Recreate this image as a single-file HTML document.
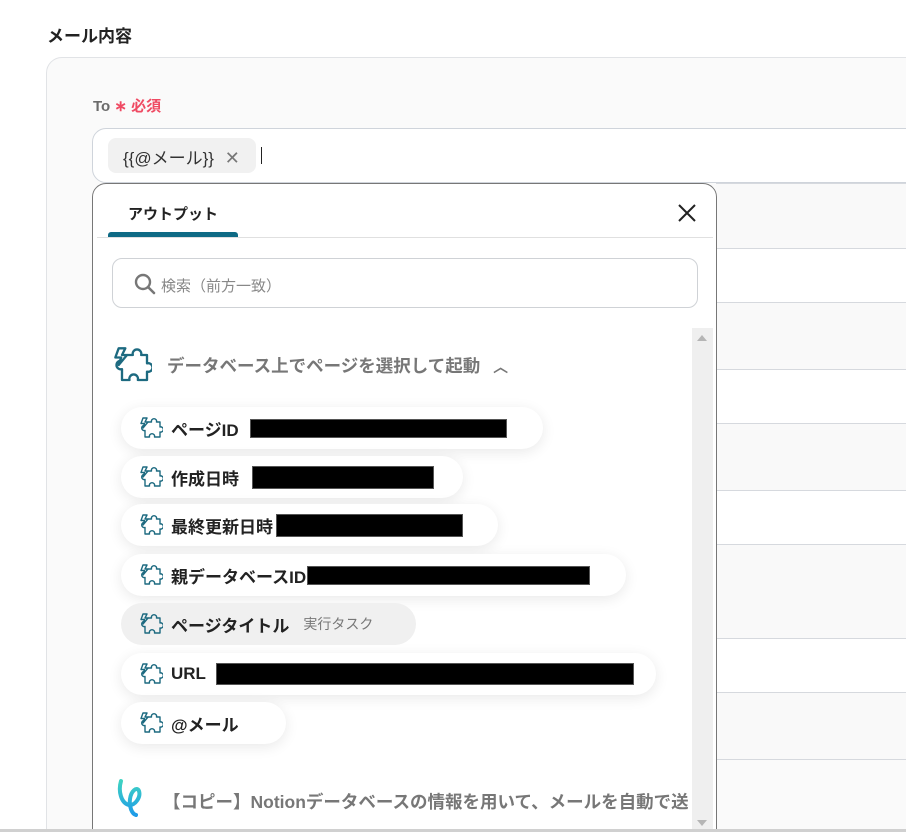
<!DOCTYPE html>
<html><head><meta charset="utf-8"><style>
*{box-sizing:border-box;margin:0;padding:0}
html,body{width:906px;height:832px;overflow:hidden}
body{background:#fff;font-family:"Liberation Sans","Noto Sans CJK JP",sans-serif;position:relative;color:#222}
.abs{position:absolute}
.band{position:absolute;left:716px;right:0;border-bottom:1px solid #d6d9de}
.pill{position:absolute;left:121px;height:42px;border-radius:21px;background:#fff;box-shadow:0 3px 14px rgba(0,0,0,.09);display:flex;align-items:center;padding-left:18px;font-size:17px;font-weight:bold;color:#222}
.pill svg{width:24px;height:24px;margin-right:8px}
.bar{display:inline-block;background:#000;height:19px;border:1px solid #555}
</style></head><body>
<div class="abs" style="left:47px;top:22px;font-size:17px;font-weight:bold;color:#222">メール内容</div>
<div class="abs" style="left:46px;top:57px;width:900px;height:800px;border:1px solid #e1e3e6;border-radius:16px;background:#fafafa"></div>
<div class="abs" style="left:93px;top:95px;font-size:15px;font-weight:bold;color:#6b6b6b">To <span style="color:#ef4a63">∗ 必須</span></div>
<div class="abs" style="left:92px;top:128px;width:830px;height:55px;border:1px solid #cfd4db;border-radius:14px;background:#fff"></div>
<div class="abs" style="left:108px;top:138px;width:148px;height:35px;border-radius:8px;background:#f1f1f1;font-size:17px;color:#333;padding:6px 0 0 15px">{{@メール}} <span style="color:#777;margin-left:6px;font-size:18px">✕</span></div>
<div class="abs" style="left:261px;top:147px;width:1px;height:17px;background:#222"></div>
<div class="band" style="top:183px;height:66px;background:#f9f9f9;border-top:1px solid #d6d9de"></div>
<div class="band" style="top:249px;height:54px;background:#fff"></div>
<div class="band" style="top:303px;height:67px;background:#f9f9f9"></div>
<div class="band" style="top:370px;height:54px;background:#fff"></div>
<div class="band" style="top:424px;height:67px;background:#f9f9f9"></div>
<div class="band" style="top:491px;height:54px;background:#fff"></div>
<div class="band" style="top:545px;height:94px;background:#f9f9f9"></div>
<div class="band" style="top:639px;height:54px;background:#fff"></div>
<div class="band" style="top:693px;height:67px;background:#f9f9f9"></div>
<div class="abs" style="left:92px;top:183px;width:625px;height:680px;border:1px solid #777;border-radius:14px;background:#fff"></div>
<div class="abs" style="left:128px;top:203px;font-size:15px;font-weight:bold;color:#222">アウトプット</div>
<div class="abs" style="left:108px;top:232px;width:130px;height:5px;background:#0e6a85;border-radius:3px 3px 0 0"></div>
<div class="abs" style="left:97px;top:237px;width:616px;height:1px;background:#e0e0e0"></div>
<svg class="abs" style="left:678px;top:204px" width="18" height="18" viewBox="0 0 18 18"><path d="M1 1l16 16M17 1L1 17" stroke="#222" stroke-width="2"/></svg>
<div class="abs" style="left:112px;top:258px;width:586px;height:50px;border:1px solid #cfd2d6;border-radius:10px;background:#fff"></div>
<svg class="abs" style="left:134px;top:273px" width="22" height="22" viewBox="0 0 22 22"><circle cx="9" cy="9" r="7" fill="none" stroke="#777" stroke-width="2.4"/><path d="M14 14l6 6" stroke="#777" stroke-width="2.6" stroke-linecap="round"/></svg>
<div class="abs" style="left:161px;top:275px;font-size:15px;color:#888">検索（前方一致）</div>
<div class="abs" style="left:692px;top:328px;width:21px;height:504px;background:#efefef"></div>
<div class="abs" style="left:697px;top:335px;border:5px solid transparent;border-bottom:6px solid #b5b5b5;border-top:0"></div>
<div class="abs" style="left:697px;top:820px;border:5px solid transparent;border-top:6px solid #b5b5b5;border-bottom:0"></div>
<svg width="0" height="0" style="position:absolute"><defs><g id="pz" fill="none" stroke="#1d6a80" stroke-width="1.4" stroke-linejoin="round"><path d="M9 6h3.5a2.6 2.6 0 1 1 5 0H21v5a2.6 2.6 0 1 1 0 5v5h-5.5a2.6 2.6 0 1 0-5 0H6v-6.5a2.6 2.6 0 1 1 0-5"/><path d="M4 2h4l-2 4h3l-5 6 1.5-4.5H2z"/></g></defs></svg>
<svg class="abs" style="left:112px;top:345px" width="40" height="40" viewBox="0 0 24 24"><use href="#pz"/></svg>
<div class="abs" style="left:167px;top:353px;font-size:17.5px;font-weight:bold;color:#777">データベース上でページを選択して起動 <span style="font-size:15px;margin-left:8px">︿</span></div>
<div class="pill" style="top:407px;width:422px"><svg viewBox="0 0 24 24"><use href="#pz"/></svg>ページID<span class="bar" style="margin-left:11px;width:257px"></span></div>
<div class="pill" style="top:456px;width:342px"><svg viewBox="0 0 24 24"><use href="#pz"/></svg>作成日時<span class="bar" style="margin-left:13px;width:182px;height:23px"></span></div>
<div class="pill" style="top:504px;width:377px"><svg viewBox="0 0 24 24"><use href="#pz"/></svg>最終更新日時<span class="bar" style="margin-left:3px;width:187px;height:23px"></span></div>
<div class="pill" style="top:554px;width:505px"><svg viewBox="0 0 24 24"><use href="#pz"/></svg>親データベースID<span class="bar" style="margin-left:1px;width:283px"></span></div>
<div class="pill" style="top:603px;width:295px;background:#f0f0f0;box-shadow:none"><svg viewBox="0 0 24 24"><use href="#pz"/></svg>ページタイトル<span style="font-weight:normal;font-size:14px;color:#777;margin-left:14px">実行タスク</span></div>
<div class="pill" style="top:653px;width:535px"><svg viewBox="0 0 24 24"><use href="#pz"/></svg>URL<span class="bar" style="margin-left:10px;width:418px;height:22px"></span></div>
<div class="pill" style="top:702px;width:165px"><svg viewBox="0 0 24 24"><use href="#pz"/></svg>@メール</div>
<svg class="abs" style="left:115px;top:778px" width="32" height="42" viewBox="0 0 32 42"><defs><linearGradient id="g" x1="0" y1="0" x2="0" y2="1"><stop offset="0" stop-color="#3fd3c2"/><stop offset="1" stop-color="#1e9be8"/></linearGradient></defs><path d="M6 3c-3 10 0 22 8 24c6 1 12-8 10-14c-2-5-8 0-9 8c-1 8 2 15 6 16" fill="none" stroke="url(#g)" stroke-width="4" stroke-linecap="round"/></svg>
<div class="abs" style="left:163px;top:789px;width:525px;overflow:hidden;white-space:nowrap;font-size:17.5px;font-weight:bold;color:#777">【コピー】Notionデータベースの情報を用いて、メールを自動で送信</div>
<div class="abs" style="left:0;top:829px;width:906px;height:3px;background:#d0d0d0"></div>
</body></html>
